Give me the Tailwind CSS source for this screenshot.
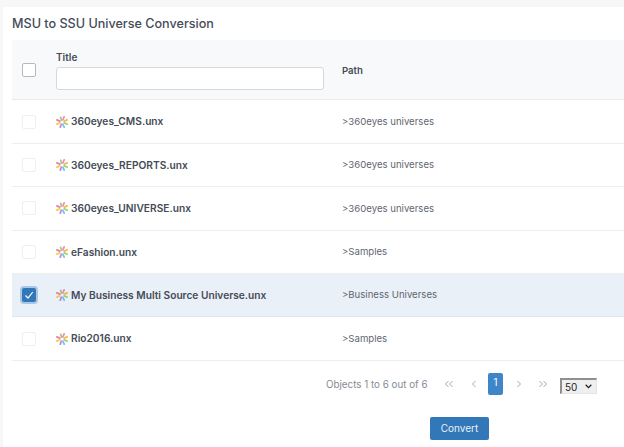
<!DOCTYPE html>
<html lang="en">
<head>
  <meta charset="UTF-8" />
  <title>MSU to SSU Universe Conversion</title>
  <script src="https://cdn.jsdelivr.net/npm/@tailwindcss/browser@4"></script>
</head>
<body class="bg-[#f7f7f7] font-['Inter',sans-serif] overflow-hidden">
  <svg class="hidden">
    <symbol id="uni" viewBox="0 0 14 14">
      <g stroke-width="2" stroke-linecap="round" opacity="0.8">
        <path d="M5.5 1.5 6.3 4.8" stroke="#8bc34a"/>
        <path d="M9.5 1 8 4.6" stroke="#f06bb5"/>
        <path d="M13 4.5 9.6 6" stroke="#f5a623"/>
        <path d="M13 9.5 9.6 8" stroke="#7bcf5f"/>
        <path d="M9.5 13 8 9.6" stroke="#4fb3e8"/>
        <path d="M5 13 6.2 9.6" stroke="#b06ad8"/>
        <path d="M1 9.5 4.5 8" stroke="#f5c518"/>
        <path d="M1 4.5 4.5 6" stroke="#e8609a"/>
      </g>
    </symbol>
  </svg>

  <div class="ml-[3px] mt-[7px] h-[440px] bg-white pl-[9px]">
    <h1 class="h-[33px] pt-[8px] text-[12.6px] leading-[18px] font-medium text-[#454c57]">MSU to SSU Universe Conversion</h1>

    <div class="flex h-[60.4px] items-center border-b border-[#e8eaed] bg-[#f8f9fa]">
      <div class="w-[44px] pl-[10px]">
        <div class="size-[14px] rounded-[2px] border border-[#b4b9c0] bg-white"></div>
      </div>
      <div class="w-[286px] pt-[1px]">
        <div class="mb-[4px] text-[10px] leading-[12px] font-semibold text-[#454c57]">Title</div>
        <input type="text" class="block h-[23px] w-[268px] rounded-[3px] border border-[#d5d8dc] bg-white" />
      </div>
      <div class="pt-[3px] text-[9.6px] font-semibold text-[#454c57]">Path</div>
    </div>

    <div class="flex h-[43.4px] items-center border-b border-[#eceef0]">
      <div class="w-[44px] pl-[10px]"><div class="size-[14px] rounded-[2px] border border-[#eeeff1] bg-white"></div></div>
      <div class="flex w-[286px] items-center gap-[3px] text-[10.2px] font-semibold text-[#454c57]"><svg class="size-[12px]"><use href="#uni"/></svg><span class="pt-[1px]">360eyes_CMS.unx</span></div>
      <div class="pt-[1px] text-[9.6px] text-[#5f6670]">&gt;360eyes universes</div>
    </div>
    <div class="flex h-[43.4px] items-center border-b border-[#eceef0]">
      <div class="w-[44px] pl-[10px]"><div class="size-[14px] rounded-[2px] border border-[#eeeff1] bg-white"></div></div>
      <div class="flex w-[286px] items-center gap-[3px] text-[10.2px] font-semibold text-[#454c57]"><svg class="size-[12px]"><use href="#uni"/></svg><span class="pt-[1px]">360eyes_REPORTS.unx</span></div>
      <div class="pt-[1px] text-[9.6px] text-[#5f6670]">&gt;360eyes universes</div>
    </div>
    <div class="flex h-[43.4px] items-center border-b border-[#eceef0]">
      <div class="w-[44px] pl-[10px]"><div class="size-[14px] rounded-[2px] border border-[#eeeff1] bg-white"></div></div>
      <div class="flex w-[286px] items-center gap-[3px] text-[10.2px] font-semibold text-[#454c57]"><svg class="size-[12px]"><use href="#uni"/></svg><span class="pt-[1px]">360eyes_UNIVERSE.unx</span></div>
      <div class="pt-[1px] text-[9.6px] text-[#5f6670]">&gt;360eyes universes</div>
    </div>
    <div class="flex h-[43.4px] items-center border-b border-[#eceef0]">
      <div class="w-[44px] pl-[10px]"><div class="size-[14px] rounded-[2px] border border-[#eeeff1] bg-white"></div></div>
      <div class="flex w-[286px] items-center gap-[3px] text-[10.2px] font-semibold text-[#454c57]"><svg class="size-[12px]"><use href="#uni"/></svg><span class="pt-[1px]">eFashion.unx</span></div>
      <div class="pt-[1px] text-[9.6px] text-[#5f6670]">&gt;Samples</div>
    </div>
    <div class="flex h-[43.4px] items-center border-b border-[#dfe5ee] bg-[#eaf0f7]">
      <div class="w-[44px] pl-[10px]">
        <div class="flex size-[14px] items-center justify-center rounded-[2px] bg-[#3278b8] shadow-[0_0_0_2px_#a9c8e6]">
          <svg class="size-[10px]" viewBox="0 0 10 10" fill="none" stroke="#fff" stroke-width="1.2"><path d="M1.5 5.5 4 8 8.8 2"/></svg>
        </div>
      </div>
      <div class="flex w-[286px] items-center gap-[3px] text-[10.2px] font-semibold text-[#454c57]"><svg class="size-[12px]"><use href="#uni"/></svg><span class="pt-[1px]">My Business Multi Source Universe.unx</span></div>
      <div class="pt-[1px] text-[9.6px] text-[#5f6670]">&gt;Business Universes</div>
    </div>
    <div class="flex h-[43.4px] items-center border-b border-[#eceef0]">
      <div class="w-[44px] pl-[10px]"><div class="size-[14px] rounded-[2px] border border-[#eeeff1] bg-white"></div></div>
      <div class="flex w-[286px] items-center gap-[3px] text-[10.2px] font-semibold text-[#454c57]"><svg class="size-[12px]"><use href="#uni"/></svg><span class="pt-[1px]">Rio2016.unx</span></div>
      <div class="pt-[1px] text-[9.6px] text-[#5f6670]">&gt;Samples</div>
    </div>

    <div class="flex h-[45.6px] items-center pl-[314px] text-[9.8px] text-[#858b93]">
      <span class="w-[112px] pt-[3px]">Objects 1 to 6 out of 6</span>
      <span class="flex w-[22px] justify-center">
        <svg class="h-[8px] w-[10px]" viewBox="0 0 10 8" fill="none" stroke="#a4a9b0"><path d="M4.5 1 1.5 4 4.5 7M8.5 1 5.5 4 8.5 7"/></svg>
      </span>
      <span class="flex w-[28px] justify-center">
        <svg class="h-[8px] w-[6px]" viewBox="0 0 6 8" fill="none" stroke="#a4a9b0"><path d="M4.5 1 1.5 4 4.5 7"/></svg>
      </span>
      <span class="flex h-[22px] w-[15px] items-center justify-center rounded-[2px] bg-[#3f86c9] text-white">1</span>
      <span class="flex w-[31px] justify-center">
        <svg class="h-[8px] w-[6px]" viewBox="0 0 6 8" fill="none" stroke="#a4a9b0"><path d="M1.5 1 4.5 4 1.5 7"/></svg>
      </span>
      <span class="flex w-[18px] justify-center">
        <svg class="h-[8px] w-[10px]" viewBox="0 0 10 8" fill="none" stroke="#a4a9b0"><path d="M1.5 1 4.5 4 1.5 7M5.5 1 8.5 4 5.5 7"/></svg>
      </span>
      <div class="relative ml-[8px] mt-[4px]">
        <select class="block h-[16px] w-[37px] appearance-none border-t-2 border-l-2 border-r border-b border-t-[#8f8f8f] border-l-[#8f8f8f] border-r-[#e4e4e4] border-b-[#e4e4e4] bg-[#efefef] pl-[3px] text-[10px] text-[#222]">
          <option>50</option>
        </select>
        <svg class="absolute right-[5px] top-[6px] h-[5px] w-[7px]" viewBox="0 0 7 5" fill="none" stroke="#222" stroke-width="1.3"><path d="M.7.8 3.5 3.6 6.3.8"/></svg>
      </div>
    </div>

    <div class="mt-[8px] pl-[418px]">
      <button class="h-[23px] w-[59px] rounded-[2px] bg-[#3278b8] text-[10px] text-[#e8f0f8]">Convert</button>
    </div>
  </div>
</body>
</html>
